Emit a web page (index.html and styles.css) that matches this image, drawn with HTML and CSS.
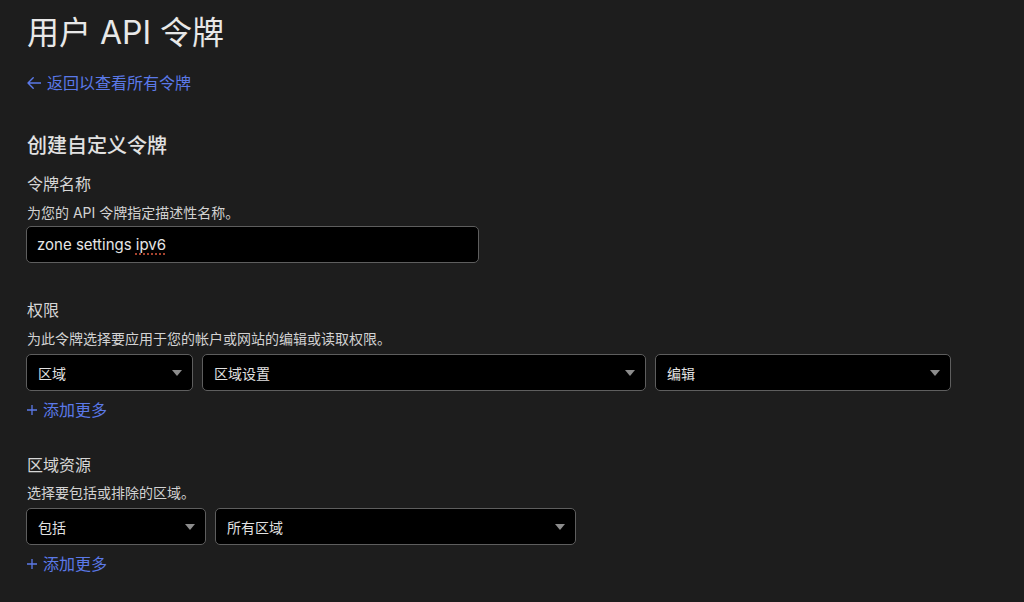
FILE: index.html
```html
<!DOCTYPE html>
<html lang="zh-CN">
<head>
<meta charset="utf-8">
<title>用户 API 令牌</title>
<link rel="stylesheet" href="styles.css">
</head>
<body>
<main class="page">
  <h1 class="title">用户 API 令牌</h1>
  <a class="back-link" href="#">
    <svg class="back-icon" width="14" height="12" viewBox="0 0 14 12" aria-hidden="true"><path d="M6.2 0.8 L1 6 L6.2 11.2 M1 6 H14" fill="none" stroke="currentColor" stroke-width="1.4" stroke-linejoin="round" stroke-linecap="round"/></svg>
    <span>返回以查看所有令牌</span>
  </a>

  <h2 class="section-title">创建自定义令牌</h2>

  <section class="field field-name">
    <div class="label">令牌名称</div>
    <p class="help">为您的 API 令牌指定描述性名称。</p>
    <div class="text-input">zone settings <span class="misspelled">ipv6</span></div>
  </section>

  <section class="field field-perms">
    <div class="label">权限</div>
    <p class="help">为此令牌选择要应用于您的帐户或网站的编辑或读取权限。</p>
    <div class="select-row">
      <div class="select sel-scope"><span>区域</span><svg class="caret" width="10" height="6" viewBox="0 0 10 6"><path d="M0 0 H10 L5 6 Z" fill="currentColor"/></svg></div>
      <div class="select sel-item"><span>区域设置</span><svg class="caret" width="10" height="6" viewBox="0 0 10 6"><path d="M0 0 H10 L5 6 Z" fill="currentColor"/></svg></div>
      <div class="select sel-level"><span>编辑</span><svg class="caret" width="10" height="6" viewBox="0 0 10 6"><path d="M0 0 H10 L5 6 Z" fill="currentColor"/></svg></div>
    </div>
    <a class="add-more" href="#"><svg class="plus" width="10" height="10" viewBox="0 0 10 10" aria-hidden="true"><path d="M5 0 V10 M0 5 H10" stroke="currentColor" stroke-width="1.3"/></svg><span>添加更多</span></a>
  </section>

  <section class="field field-zones">
    <div class="label">区域资源</div>
    <p class="help">选择要包括或排除的区域。</p>
    <div class="select-row">
      <div class="select sel-include"><span>包括</span><svg class="caret" width="10" height="6" viewBox="0 0 10 6"><path d="M0 0 H10 L5 6 Z" fill="currentColor"/></svg></div>
      <div class="select sel-zones"><span>所有区域</span><svg class="caret" width="10" height="6" viewBox="0 0 10 6"><path d="M0 0 H10 L5 6 Z" fill="currentColor"/></svg></div>
    </div>
    <a class="add-more" href="#"><svg class="plus" width="10" height="10" viewBox="0 0 10 10" aria-hidden="true"><path d="M5 0 V10 M0 5 H10" stroke="currentColor" stroke-width="1.3"/></svg><span>添加更多</span></a>
  </section>
</main>
</body>
</html>
```

FILE: styles.css
```css
html, body {
  margin: 0;
  padding: 0;
  background: #1d1d1d;
  height: 100%;
  overflow: hidden;
}

body {
  font-family: Inter, "Noto Sans CJK SC", sans-serif;
  color: #dcdcdc;
}

.page {
  padding: 13px 0 0 26px;
}

.title {
  margin: 0;
  padding-left: 1px;
  font-size: 32px;
  line-height: 40px;
  font-weight: 400;
  color: #e8e8e8;
}

.back-link {
  margin-top: 18px;
  display: flex;
  align-items: center;
  gap: 6px;
  height: 24px;
  padding-left: 1px;
  font-size: 16px;
  line-height: 24px;
  color: #5b79e8;
  text-decoration: none;
  width: max-content;
}

.section-title {
  margin: 37px 0 0;
  padding-left: 1px;
  font-size: 20px;
  line-height: 28px;
  font-weight: 500;
  color: #e2e2e2;
}

.field {
  display: flex;
  flex-direction: column;
  align-items: flex-start;
}

.field-name { margin-top: 12px; }
.field-perms { margin-top: 35px; }
.field-zones { margin-top: 31px; }

.label {
  padding-left: 1px;
  font-size: 16px;
  line-height: 24px;
  color: #d6d6d6;
}

.help {
  margin: 7px 0 0;
  padding-left: 1px;
  font-size: 14px;
  line-height: 20px;
  color: #d2d2d2;
}

.field-zones .help { margin-top: 6px; }

.text-input {
  margin-top: 3px;
  box-sizing: border-box;
  width: 453px;
  height: 37px;
  padding: 0 10px;
  display: flex;
  align-items: center;
  white-space: pre;
  background: #000;
  border: 1px solid #5e5e5e;
  border-radius: 5px;
  font-size: 15px;
  color: #e6e6e6;
}

.misspelled {
  text-decoration: underline dotted #a8442f;
  text-decoration-thickness: 1.5px;
  text-underline-offset: 3px;
}

.select-row {
  margin-top: 5px;
  display: flex;
  gap: 9px;
}

.select {
  box-sizing: border-box;
  height: 37px;
  padding: 0 10px 0 11px;
  display: flex;
  align-items: center;
  justify-content: space-between;
  background: #000;
  border: 1px solid #5e5e5e;
  border-radius: 5px;
  font-size: 14px;
  color: #e2e2e2;
}

.caret {
  color: #8c8c8c;
  flex: none;
}

.sel-scope { width: 167px; }
.sel-item { width: 444px; }
.sel-level { width: 296px; }
.sel-include { width: 180px; }
.sel-zones { width: 361px; }

.add-more {
  margin-top: 7px;
  display: flex;
  align-items: center;
  gap: 6px;
  height: 24px;
  padding-left: 1px;
  font-size: 16px;
  line-height: 24px;
  color: #5b79e8;
  text-decoration: none;
}

.plus { flex: none; }
```
